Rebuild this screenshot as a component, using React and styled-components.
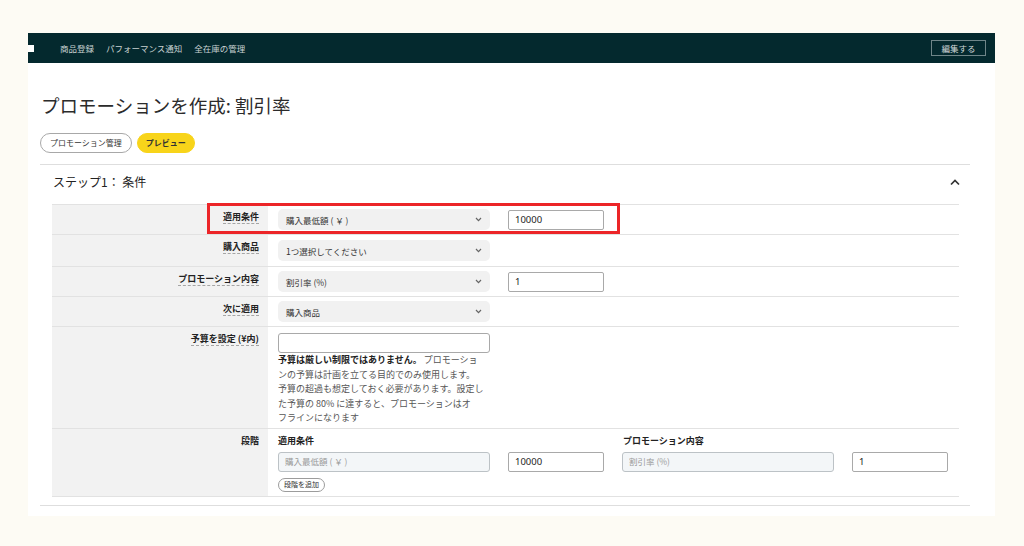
import React from 'react';
import styled, { createGlobalStyle } from 'styled-components';

const GlobalStyle = createGlobalStyle`
  html, body {
    margin: 0;
    padding: 0;
    background: #fdfbf4;
  }
  body {
    font-family: "Noto Sans CJK JP", "Noto Sans", sans-serif;
    color: #333;
  }
  * {
    box-sizing: border-box;
  }
`;

const Frame = styled.div`
  padding: 33px 0 0 28px;
  height: 546px;
`;

const Sheet = styled.div`
  width: 967px;
  height: 483px;
  background: #fff;
`;

const NavBar = styled.nav`
  height: 30px;
  background: #04292e;
  display: flex;
  align-items: center;
  padding-right: 9px;
`;

const NavMark = styled.span`
  width: 6px;
  height: 7px;
  background: #fff;
  margin-right: 26px;
`;

const NavItems = styled.div`
  display: flex;
  gap: 12px;
`;

const NavItem = styled.a`
  font-size: 8.5px;
  color: #c9d2d2;
  text-decoration: none;
  line-height: 1;
`;

const EditButton = styled.button`
  margin-left: auto;
  width: 55px;
  height: 16px;
  padding: 0;
  border: 1px solid #6f8588;
  background: transparent;
  color: #d3dada;
  font-family: inherit;
  font-size: 8.5px;
  line-height: 1;
`;

const Main = styled.main`
  padding: 30px 25px 0 12px;
`;

const Title = styled.h1`
  margin: 0 0 16px 1px;
  font-size: 18.5px;
  line-height: 24px;
  font-weight: 400;
  color: #2b2b2b;
`;

const Pills = styled.div`
  display: flex;
  gap: 5px;
  margin-bottom: 11px;
`;

const Pill = styled.button`
  height: 20px;
  padding: 0 ${(p) => (p.$active ? '8px' : '9px')};
  border-radius: 10px;
  border: 1px solid ${(p) => (p.$active ? '#f8d41a' : '#a8a8a8')};
  background: ${(p) => (p.$active ? '#f8d41a' : '#fff')};
  color: #333;
  font-family: inherit;
  font-size: 8px;
  font-weight: ${(p) => (p.$active ? 700 : 400)};
  line-height: 1;
`;

const Section = styled.section`
  border-top: 1px solid #dedede;
  border-bottom: 1px solid #dedede;
  padding-bottom: 8px;
`;

const SectionHeader = styled.div`
  display: flex;
  align-items: center;
  justify-content: space-between;
  height: 39px;
  padding: 0 10px 4px 13px;
`;

const SectionTitle = styled.h2`
  margin: 0;
  font-size: 12px;
  font-weight: 400;
  color: #222;
  line-height: 18px;
  position: relative;
  top: -1px;
`;

const Table = styled.div`
  margin: 0 11px 0 12px;
  border-top: 1px solid #e2e2e2;
`;

const Row = styled.div`
  position: relative;
  display: grid;
  grid-template-columns: 216px 1fr;
  border-bottom: 1px solid #e2e2e2;
`;

const LabelCell = styled.div`
  display: flex;
  justify-content: flex-end;
  align-items: flex-start;
  background: #f2f2f2;
  padding: 5px 9px 0 0;
`;

const Label = styled.span`
  font-size: 9px;
  font-weight: 700;
  line-height: 13px;
  color: #222;
  border-bottom: 1px dashed ${(p) => (p.$plain ? 'transparent' : '#a5a5a5')};
`;

const ValueCell = styled.div`
  display: flex;
  flex-direction: ${(p) => (p.$column ? 'column' : 'row')};
  align-items: ${(p) => (p.$column ? 'flex-start' : 'center')};
  gap: ${(p) => (p.$column ? '0' : '18px')};
  padding: ${(p) => p.$pad || '4px 10px'};
`;

const Select = styled.div`
  display: flex;
  align-items: center;
  justify-content: space-between;
  width: 212px;
  height: 21px;
  padding: 0 8px;
  background: #f1f1f1;
  border-radius: 5px;
  font-size: 8.5px;
  color: #333;
`;

const TextInput = styled.input`
  display: block;
  width: ${(p) => (p.$wide ? '212px' : '96px')};
  height: 20px;
  padding: 0 6px;
  border: 1px solid ${(p) => (p.$muted ? '#bcc2c6' : '#a9a9a9')};
  border-radius: ${(p) => (p.$wide ? '3px' : '2px')};
  background: ${(p) => (p.$muted ? '#f3f6f8' : '#fff')};
  font-family: "Noto Sans", "Noto Sans CJK JP", sans-serif;
  font-size: 9.5px;
  color: #222;
  outline: none;

  &::placeholder {
    color: #9a9a9a;
    font-family: "Noto Sans CJK JP", sans-serif;
    font-size: 8.5px;
  }
`;

const Note = styled.p`
  margin: 0;
  width: 212px;
  font-size: 9px;
  line-height: 14.5px;
  color: #555;

  strong {
    color: #222;
  }
`;

const TierGrid = styled.div`
  display: grid;
  grid-template-columns: 212px 96px 212px 96px;
  column-gap: 18px;
  row-gap: 5px;

  & > :nth-child(2) {
    margin-left: 1px;
  }
`;

const TierHeading = styled.span`
  grid-column: span 2;
  font-size: 9px;
  font-weight: 700;
  line-height: 13px;
  color: #222;
`;

const AddTierButton = styled.button`
  margin-top: 6px;
  height: 14px;
  padding: 0 5px;
  border: 1px solid #9c9c9c;
  border-radius: 8px;
  background: #fff;
  color: #333;
  font-family: inherit;
  font-size: 7px;
  line-height: 1;
`;

const Highlight = styled.div`
  position: absolute;
  left: 155px;
  top: -2px;
  width: 413px;
  height: 31px;
  border: 3px solid #ec2528;
  pointer-events: none;
`;

const ChevronDown = () => (
  <svg width="7" height="5" viewBox="0 0 7 5">
    <polyline points="1,1 3.5,3.6 6,1" fill="none" stroke="#666" strokeWidth="1.2" />
  </svg>
);

const ChevronUp = () => (
  <svg width="10" height="7" viewBox="0 0 10 7">
    <polyline points="1,5.5 5,1.5 9,5.5" fill="none" stroke="#333" strokeWidth="1.7" />
  </svg>
);

const SelectBox = ({ children }) => (
  <Select>
    <span>{children}</span>
    <ChevronDown />
  </Select>
);

const App = () => (
  <>
    <GlobalStyle />
    <Frame>
      <Sheet>
        <NavBar>
          <NavMark />
          <NavItems>
            <NavItem>商品登録</NavItem>
            <NavItem>パフォーマンス通知</NavItem>
            <NavItem>全在庫の管理</NavItem>
          </NavItems>
          <EditButton>編集する</EditButton>
        </NavBar>
        <Main>
          <Title>プロモーションを作成: 割引率</Title>
          <Pills>
            <Pill>プロモーション管理</Pill>
            <Pill $active>プレビュー</Pill>
          </Pills>
          <Section>
            <SectionHeader>
              <SectionTitle>ステップ1： 条件</SectionTitle>
              <ChevronUp />
            </SectionHeader>
            <Table>
              <Row>
                <LabelCell><Label>適用条件</Label></LabelCell>
                <ValueCell>
                  <SelectBox>購入最低額 ( ￥ )</SelectBox>
                  <TextInput value="10000" readOnly />
                </ValueCell>
                <Highlight />
              </Row>
              <Row>
                <LabelCell><Label>購入商品</Label></LabelCell>
                <ValueCell $pad="5px 10px 5px">
                  <SelectBox>1つ選択してください</SelectBox>
                </ValueCell>
              </Row>
              <Row>
                <LabelCell><Label>プロモーション内容</Label></LabelCell>
                <ValueCell>
                  <SelectBox>割引率 (%)</SelectBox>
                  <TextInput value="1" readOnly />
                </ValueCell>
              </Row>
              <Row>
                <LabelCell><Label>次に適用</Label></LabelCell>
                <ValueCell>
                  <SelectBox>購入商品</SelectBox>
                </ValueCell>
              </Row>
              <Row>
                <LabelCell><Label>予算を設定 (¥内)</Label></LabelCell>
                <ValueCell $column $pad="6px 10px 2px">
                  <TextInput $wide readOnly />
                  <Note>
                    <strong>予算は厳しい制限ではありません。</strong> プロモーショ<br />
                    ンの予算は計画を立てる目的でのみ使用します。<br />
                    予算の超過も想定しておく必要があります。設定し<br />
                    た予算の 80% に達すると、プロモーションはオ<br />
                    フラインになります
                  </Note>
                </ValueCell>
              </Row>
              <Row>
                <LabelCell><Label $plain>段階</Label></LabelCell>
                <ValueCell $column $pad="5px 10px 4px">
                  <TierGrid>
                    <TierHeading>適用条件</TierHeading>
                    <TierHeading>プロモーション内容</TierHeading>
                    <TextInput $wide $muted placeholder="購入最低額 ( ￥ )" readOnly />
                    <TextInput value="10000" readOnly />
                    <TextInput $wide $muted placeholder="割引率 (%)" readOnly />
                    <TextInput value="1" readOnly />
                  </TierGrid>
                  <AddTierButton>段階を追加</AddTierButton>
                </ValueCell>
              </Row>
            </Table>
          </Section>
        </Main>
      </Sheet>
    </Frame>
  </>
);

export default App;
